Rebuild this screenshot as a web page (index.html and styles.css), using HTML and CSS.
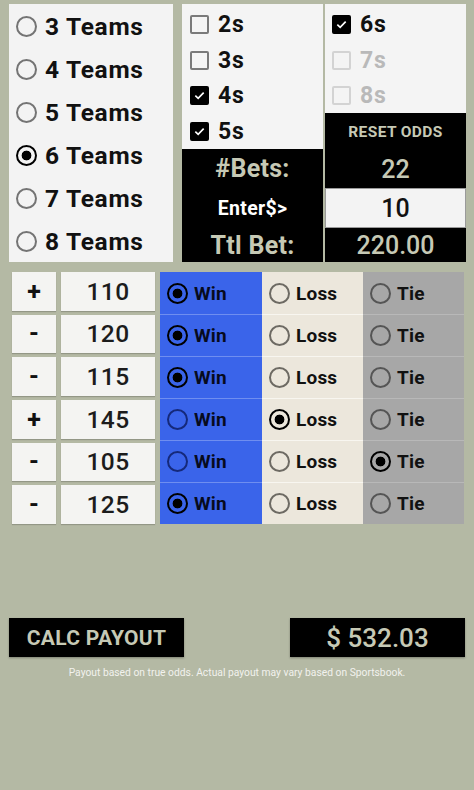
FILE: index.html
```html
<!DOCTYPE html>
<html>
<head>
<meta charset="utf-8">
<link rel="stylesheet" href="styles.css">
</head>
<body>
<div class="app">
  <div class="top">
    <div class="teams">
      <div class="team"><span class="radio"></span><span>3 Teams</span></div>
      <div class="team"><span class="radio"></span><span>4 Teams</span></div>
      <div class="team"><span class="radio"></span><span>5 Teams</span></div>
      <div class="team"><span class="radio on"></span><span>6 Teams</span></div>
      <div class="team"><span class="radio"></span><span>7 Teams</span></div>
      <div class="team"><span class="radio"></span><span>8 Teams</span></div>
    </div>
    <div class="mid">
      <div class="checks">
        <div class="chk"><span class="cb"></span><span>2s</span></div>
        <div class="chk"><span class="cb"></span><span>3s</span></div>
        <div class="chk"><span class="cb on"><svg viewBox="0 0 18 18"><path d="M4 9.2 L7.4 12.4 L14 5.6" /></svg></span><span>4s</span></div>
        <div class="chk"><span class="cb on"><svg viewBox="0 0 18 18"><path d="M4 9.2 L7.4 12.4 L14 5.6" /></svg></span><span>5s</span></div>
      </div>
      <div class="labels">
        <div class="lab bets-lab">#Bets:</div>
        <div class="lab enter">Enter$&gt;</div>
        <div class="lab ttl">Ttl Bet:</div>
      </div>
    </div>
    <div class="right">
      <div class="checks short">
        <div class="chk"><span class="cb on"><svg viewBox="0 0 18 18"><path d="M4 9.2 L7.4 12.4 L14 5.6" /></svg></span><span>6s</span></div>
        <div class="chk off"><span class="cb"></span><span>7s</span></div>
        <div class="chk off"><span class="cb"></span><span>8s</span></div>
      </div>
      <div class="reset">RESET ODDS</div>
      <div class="val count">22</div>
      <div class="val input">10</div>
      <div class="val total">220.00</div>
    </div>
  </div>

  <div class="bets">
    <div class="col pm">
      <div class="box">+</div>
      <div class="box">-</div>
      <div class="box">-</div>
      <div class="box">+</div>
      <div class="box">-</div>
      <div class="box">-</div>
    </div>
    <div class="col odds">
      <div class="box">110</div>
      <div class="box">120</div>
      <div class="box">115</div>
      <div class="box">145</div>
      <div class="box">105</div>
      <div class="box">125</div>
    </div>
    <div class="results">
      <div class="res win"><span class="radio on"></span>Win</div>
      <div class="res loss"><span class="radio"></span>Loss</div>
      <div class="res tie"><span class="radio"></span>Tie</div>

      <div class="res win"><span class="radio on"></span>Win</div>
      <div class="res loss"><span class="radio"></span>Loss</div>
      <div class="res tie"><span class="radio"></span>Tie</div>

      <div class="res win"><span class="radio on"></span>Win</div>
      <div class="res loss"><span class="radio"></span>Loss</div>
      <div class="res tie"><span class="radio"></span>Tie</div>

      <div class="res win"><span class="radio"></span>Win</div>
      <div class="res loss"><span class="radio on"></span>Loss</div>
      <div class="res tie"><span class="radio"></span>Tie</div>

      <div class="res win"><span class="radio"></span>Win</div>
      <div class="res loss"><span class="radio"></span>Loss</div>
      <div class="res tie"><span class="radio on"></span>Tie</div>

      <div class="res win"><span class="radio on"></span>Win</div>
      <div class="res loss"><span class="radio"></span>Loss</div>
      <div class="res tie"><span class="radio"></span>Tie</div>
    </div>
  </div>

  <div class="footer">
    <div class="calc">CALC PAYOUT</div>
    <div class="payout">$ 532.03</div>
  </div>
  <div class="note">Payout based on true odds. Actual payout may vary based on Sportsbook.</div>
</div>
</body>
</html>
```
FILE: styles.css
```css
html, body {
  margin: 0;
  padding: 0;
  background: #b4b9a4;
}
body {
  font-family: Roboto, "Liberation Sans", sans-serif;
  color: #111;
}
.app {
  width: 474px;
  height: 790px;
}
.top {
  display: flex;
  padding: 4px 0 0 9px;
  height: 258px;
}
.teams {
  width: 164px;
  background: #f3f3f3;
  padding-top: 1px;
  margin-right: 9px;
  box-sizing: border-box;
}
.team {
  height: 43px;
  display: flex;
  align-items: center;
  padding-left: 7px;
  gap: 8px;
  font-size: 24.5px;
  font-weight: 700;
  letter-spacing: 0.7px;
}
.radio {
  width: 21px;
  height: 21px;
  flex: none;
  box-sizing: border-box;
  border-radius: 50%;
  border: 2px solid #747474;
}
.radio.on {
  border: 2.5px solid #000;
  background: radial-gradient(circle, #000 0 4.6px, transparent 5.2px);
}
.mid, .right {
  width: 141px;
  display: flex;
  flex-direction: column;
}
.mid { margin-right: 2px; }
.checks {
  background: #f4f4f4;
  height: 145px;
  padding-top: 3px;
  box-sizing: border-box;
}
.checks.short { height: 109px; }
.chk {
  height: 35.5px;
  display: flex;
  align-items: center;
  padding-left: 8px;
  gap: 9px;
  font-size: 23px;
  font-weight: 700;
  letter-spacing: 0.8px;
}
.right .chk { padding-left: 7px; }
.cb {
  width: 19px;
  height: 19px;
  flex: none;
  box-sizing: border-box;
  border: 2px solid #7a7a7a;
  border-radius: 2px;
  display: flex;
}
.cb.on {
  background: #000;
  border-color: #000;
}
.cb svg {
  width: 100%;
  height: 100%;
}
.cb svg path {
  fill: none;
  stroke: #fff;
  stroke-width: 2;
}
.chk.off { color: #b9b9b9; }
.chk.off .cb { border-color: #d3d3d3; }
.labels {
  background: #000;
  flex: 1;
  display: flex;
  flex-direction: column;
}
.lab {
  display: flex;
  align-items: center;
  justify-content: center;
  font-weight: 700;
  color: #c6c9b5;
}
.bets-lab { height: 39px; font-size: 25px; letter-spacing: 0.3px; }
.enter { height: 40px; font-size: 19.5px; color: #fff; letter-spacing: 0.3px; }
.ttl { flex: 1; font-size: 25px; letter-spacing: 0.3px; }
.reset {
  background: #000;
  height: 37px;
  color: #c6c9b5;
  font-size: 15.5px;
  font-weight: 700;
  letter-spacing: 0.4px;
  display: flex;
  align-items: center;
  justify-content: center;
}
.val {
  display: flex;
  align-items: center;
  justify-content: center;
  font-weight: 500;
  font-size: 25px;
  background: #000;
  color: #c6c9b5;
}
.count { height: 38px; }
.input {
  height: 40px;
  background: #f3f3f3;
  color: #111;
  box-sizing: border-box;
  border: 1px solid #9a9a9a;
}
.total { flex: 1; }

.bets {
  display: flex;
  margin-top: 10px;
  padding-left: 12px;
  height: 252px;
}
.col {
  display: flex;
  flex-direction: column;
  gap: 4px;
  margin-right: 5px;
}
.pm { width: 44px; }
.odds { width: 94px; }
.box {
  height: calc((252px - 20px) / 6);
  background: #f4f4f2;
  box-shadow: 0 1px 1px rgba(0,0,0,0.18);
  display: flex;
  align-items: center;
  justify-content: center;
  font-size: 24px;
}
.pm .box { font-weight: 700; font-size: 25px; }
.odds .box { font-weight: 500; color: #1c1c1c; font-size: 24.5px; letter-spacing: 0.4px; }
.results {
  display: grid;
  grid-template-columns: 102px 101px 101px;
  grid-template-rows: repeat(6, 42px);
}
.res {
  display: flex;
  align-items: center;
  gap: 6px;
  padding-left: 7px;
  font-size: 19px;
  font-weight: 700;
  letter-spacing: 0.2px;
  box-sizing: border-box;
}
.win { background: #3a64ea; color: #070b1e; border-top: 1px solid #6f8ef0; }
.loss { background: #ece7dc; border-top: 1px solid #f8f6f0; }
.tie { background: #a7a7a7; border-top: 1px solid #b8b8b8; }
.results .res:nth-child(-n+3) { border-top: none; }
.win .radio { border-color: #15297a; }
.loss .radio { border-color: #6d6a63; }
.tie .radio { border-color: #555; }
.res .radio.on { border-color: #000; }

.footer {
  display: flex;
  justify-content: space-between;
  margin-top: 94px;
  padding: 0 9px;
}
.calc, .payout {
  height: 39px;
  background: #000;
  color: #c6c9b5;
  display: flex;
  align-items: center;
  justify-content: center;
  box-shadow: 0 1px 2px rgba(0,0,0,0.3);
}
.calc { width: 175px; font-size: 21px; font-weight: 700; letter-spacing: 0.3px; }
.payout { width: 175px; font-size: 26px; font-weight: 500; }
.note {
  margin-top: 9px;
  text-align: center;
  font-size: 10.3px;
  color: #f2f2ee;
}
```
